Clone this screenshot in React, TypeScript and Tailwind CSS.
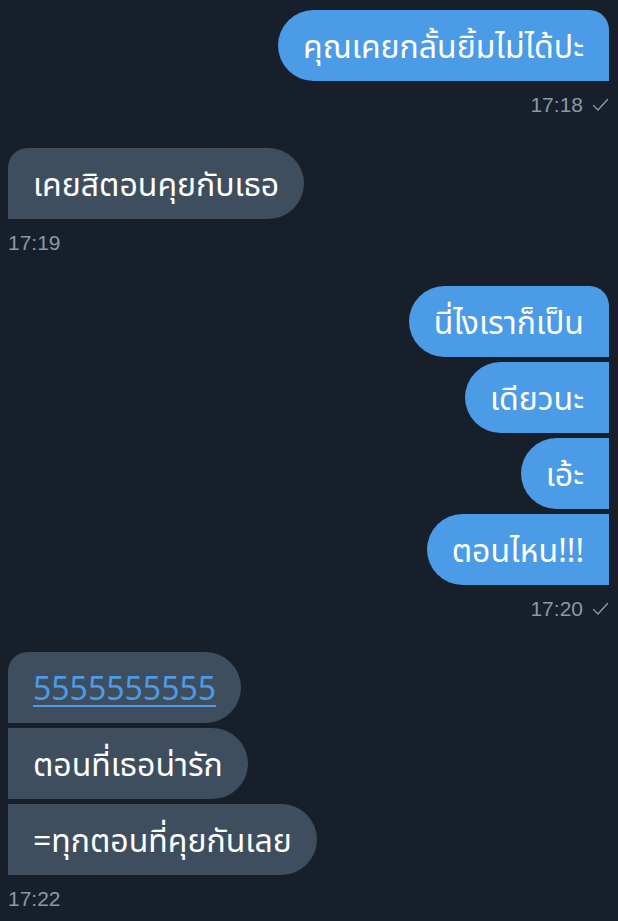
import React from "react";

type Side = "me" | "them";

type Group = {
  side: Side;
  time: string;
  messages: { text: string; link?: boolean }[];
};

const groups: Group[] = [
  { side: "me", time: "17:18", messages: [{ text: "คุณเคยกลั้นยิ้มไม่ได้ปะ" }] },
  { side: "them", time: "17:19", messages: [{ text: "เคยสิตอนคุยกับเธอ" }] },
  {
    side: "me",
    time: "17:20",
    messages: [
      { text: "นี่ไงเราก็เป็น" },
      { text: "เดียวนะ" },
      { text: "เอ้ะ" },
      { text: "ตอนไหน!!!" },
    ],
  },
  {
    side: "them",
    time: "17:22",
    messages: [
      { text: "5555555555", link: true },
      { text: "ตอนที่เธอน่ารัก" },
      { text: "=ทุกตอนที่คุยกันเลย" },
    ],
  },
];

function Check() {
  return (
    <svg width="17" height="14" viewBox="0 0 17 14" fill="none" className="ml-[9px]">
      <path d="M1.5 7.5 L6 12 L15.5 1.5" stroke="#8b98a5" strokeWidth="1.4" strokeLinecap="round" strokeLinejoin="round" />
    </svg>
  );
}

function Bubble({ side, first, text, link }: { side: Side; first: boolean; text: string; link?: boolean }) {
  const shape =
    side === "me"
      ? first
        ? "rounded-l-[36px] rounded-tr-[20px] bg-[#4b9be6]"
        : "rounded-l-[36px] bg-[#4b9be6]"
      : first
        ? "rounded-r-[36px] rounded-tl-[20px] bg-[#3e4e5e]"
        : "rounded-r-[36px] bg-[#3e4e5e]";

  return (
    <div className={`flex h-[71px] items-center px-[25px] text-[32px] ${shape}`}>
      <span className={link ? "text-[#4b9be6] underline decoration-2 underline-offset-[5px]" : "text-white"}>
        {text}
      </span>
    </div>
  );
}

export default function App() {
  return (
    <div
      className="min-h-[921px] bg-[#17202a] pl-[8px] pr-[9px] pt-[10px]"
      style={{ fontFamily: '"Noto Sans", "Noto Sans Thai", "Liberation Sans", sans-serif' }}
    >
      {groups.map((group) => (
        <div
          key={group.time}
          className={`mb-[31px] flex flex-col ${group.side === "me" ? "items-end" : "items-start"}`}
        >
          <div className={`flex flex-col gap-[5px] ${group.side === "me" ? "items-end" : "items-start"}`}>
            {group.messages.map((m, i) => (
              <Bubble key={m.text} side={group.side} first={i === 0} text={m.text} link={m.link} />
            ))}
          </div>
          <div
            className="mt-[12px] flex h-[24px] items-center text-[21px] text-[#8b98a5]"
            style={{ fontFamily: '"Liberation Sans", Arial, sans-serif' }}
          >
            <span>{group.time}</span>
            {group.side === "me" && <Check />}
          </div>
        </div>
      ))}
    </div>
  );
}
